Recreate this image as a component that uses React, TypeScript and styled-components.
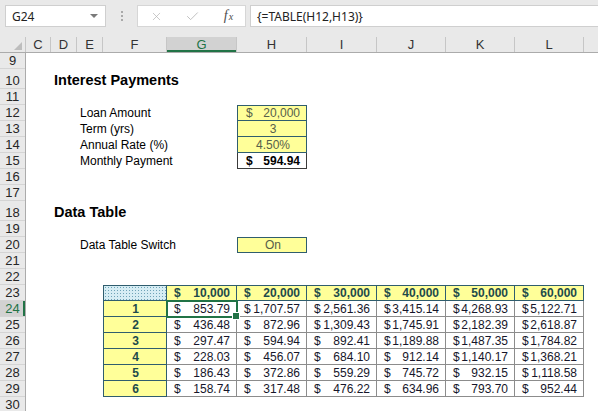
import React from 'react';
import styled, { createGlobalStyle, css } from 'styled-components';
import { X, Check } from 'lucide-react';

const TEAL = '#2f5d6e';
const GRAY = '#8c8c8c';
const YELLOW = '#ffff99';
const EXCEL_GREEN = '#217346';

const COLUMNS = [
  { name: 'C', width: 25 },
  { name: 'D', width: 26 },
  { name: 'E', width: 26 },
  { name: 'F', width: 64 },
  { name: 'G', width: 70 },
  { name: 'H', width: 70 },
  { name: 'I', width: 70 },
  { name: 'J', width: 69 },
  { name: 'K', width: 69 },
  { name: 'L', width: 69 },
];

// excel row number -> pixel height (rows 10 and 18 hold the bigger headings)
const ROWS = Array.from({ length: 22 }, (_, i) => {
  const num = i + 9;
  return { num, height: num === 10 || num === 18 ? 20 : 16 };
});

const LOAN_AMOUNTS = ['10,000', '20,000', '30,000', '40,000', '50,000', '60,000'];

const PAYMENTS = [
  ['853.79', '1,707.57', '2,561.36', '3,415.14', '4,268.93', '5,122.71'],
  ['436.48', '872.96', '1,309.43', '1,745.91', '2,182.39', '2,618.87'],
  ['297.47', '594.94', '892.41', '1,189.88', '1,487.35', '1,784.82'],
  ['228.03', '456.07', '684.10', '912.14', '1,140.17', '1,368.21'],
  ['186.43', '372.86', '559.29', '745.72', '932.15', '1,118.58'],
  ['158.74', '317.48', '476.22', '634.96', '793.70', '952.44'],
];

const App = () => {
  return (
    <>
      <GlobalStyle />
      <Window>
        <FormulaBar>
          <NameBox>
            <span>G24</span>
            <DropArrow />
          </NameBox>
          <Grip>
            <Dot />
            <Dot />
            <Dot />
          </Grip>
          <ButtonGroup>
            <BarButton>
              <X size={13} strokeWidth={1.3} />
            </BarButton>
            <BarButton>
              <Check size={15} strokeWidth={1.3} />
            </BarButton>
            <BarButton $dark>
              <Fx>
                f<small>x</small>
              </Fx>
            </BarButton>
          </ButtonGroup>
          <FormulaInput>{'{=TABLE(H12,H13)}'}</FormulaInput>
        </FormulaBar>

        <ColumnHeaders>
          <Corner />
          {COLUMNS.map((col) => (
            <ColumnHeader key={col.name} $width={col.width} $selected={col.name === 'G'}>
              {col.name}
            </ColumnHeader>
          ))}
          <ColumnHeader $width={0} $fill />
        </ColumnHeaders>

        <Body>
          <RowHeaders>
            {ROWS.map((row) => (
              <RowHeader key={row.num} $height={row.height} $selected={row.num === 24}>
                {row.num}
              </RowHeader>
            ))}
          </RowHeaders>

          <Sheet>
            <Heading $area="2 / 2 / 3 / 9">Interest Payments</Heading>

            <Label $area="4 / 3 / 5 / 6">Loan Amount</Label>
            <Label $area="5 / 3 / 6 / 6">Term (yrs)</Label>
            <Label $area="6 / 3 / 7 / 6">Annual Rate (%)</Label>
            <Label $area="7 / 3 / 8 / 6">Monthly Payment</Label>

            <InputStack $area="4 / 6 / 8 / 7">
              <InputCell $money>
                <span>$</span>
                <span>20,000</span>
              </InputCell>
              <InputCell>3</InputCell>
              <InputCell>4.50%</InputCell>
              <ResultCell>
                <span>$</span>
                <span>594.94</span>
              </ResultCell>
            </InputStack>

            <Heading $area="10 / 2 / 11 / 9">Data Table</Heading>

            <Label $area="12 / 3 / 13 / 6">Data Table Switch</Label>
            <SwitchCell $area="12 / 6 / 13 / 7">On</SwitchCell>

            <DataTable $area="15 / 4 / 22 / 11">
              <TableCell $kind="corner" $top $left />
              {LOAN_AMOUNTS.map((amount) => (
                <TableCell key={amount} $kind="head" $top>
                  <span>$</span>
                  <span>{amount}</span>
                </TableCell>
              ))}
              {PAYMENTS.map((row, i) => (
                <React.Fragment key={i}>
                  <TableCell $kind="key" $left>
                    {i + 1}
                  </TableCell>
                  {row.map((value, j) => (
                    <TableCell key={j} $kind="value" $selected={i === 0 && j === 0}>
                      <span>$</span>
                      <span>{value}</span>
                    </TableCell>
                  ))}
                </React.Fragment>
              ))}
            </DataTable>
          </Sheet>
        </Body>
      </Window>
    </>
  );
};

export default App;

const GlobalStyle = createGlobalStyle`
  * {
    box-sizing: border-box;
  }

  html,
  body {
    margin: 0;
    padding: 0;
    background: #ffffff;
  }
`;

const Window = styled.div`
  display: flex;
  flex-direction: column;

  width: 598px;
  height: 411px;
  overflow: hidden;

  background: #ffffff;
  font-family: 'Liberation Sans', Arial, sans-serif;
`;

/* ---------- formula bar ---------- */

const FormulaBar = styled.div`
  display: flex;
  align-items: flex-start;
  flex-shrink: 0;

  height: 37px;
  padding: 5px 0 0 5px;

  background: #e9e9e9;
  font-family: 'Noto Sans', 'Open Sans', sans-serif;
  font-size: 12px;
  color: #222222;
`;

const NameBox = styled.div`
  display: flex;
  align-items: center;
  justify-content: space-between;

  width: 101px;
  height: 22px;
  padding: 0 7px 0 6px;

  background: #ffffff;
  border: 1px solid #cfcfcf;
`;

const DropArrow = styled.span`
  width: 0;
  height: 0;

  border-left: 4px solid transparent;
  border-right: 4px solid transparent;
  border-top: 4px solid #7a7a7a;
`;

const Grip = styled.div`
  display: flex;
  flex-direction: column;
  align-items: center;
  gap: 2px;

  width: 31px;
  padding-top: 6px;
`;

const Dot = styled.span`
  width: 2px;
  height: 2px;

  background: #a9a9a9;
`;

const ButtonGroup = styled.div`
  display: grid;
  grid-template-columns: 36px 36px 37px;

  width: 109px;
  height: 22px;

  background: #ffffff;
  border: 1px solid #d6d6d6;
`;

const BarButton = styled.div<{ $dark?: boolean }>`
  display: flex;
  align-items: center;
  justify-content: center;

  color: ${(p) => (p.$dark ? '#4d4d4d' : '#b3b3b3')};
`;

const Fx = styled.span`
  font-family: 'Liberation Serif', 'Times New Roman', serif;
  font-style: italic;
  font-size: 14px;

  small {
    font-size: 10px;
    margin-left: 1px;
  }
`;

const FormulaInput = styled.div`
  display: flex;
  align-items: center;
  flex: 1;

  height: 22px;
  margin-left: 4px;
  padding-left: 6px;

  background: #ffffff;
  border: 1px solid #cfcfcf;
  border-right: none;
`;

/* ---------- headers ---------- */

const ColumnHeaders = styled.div`
  display: flex;
  flex-shrink: 0;

  height: 16px;

  background: #e9e9e9;
  border-bottom: 1px solid #ababab;
  font-family: 'Liberation Sans', Arial, sans-serif;
  font-size: 13px;
  line-height: 15px;
  color: #333333;
`;

const Corner = styled.div`
  position: relative;

  width: 26px;

  border-right: 1px solid #c6c6c6;

  &::after {
    content: '';
    position: absolute;
    right: 3px;
    bottom: 2px;

    border-left: 8px solid transparent;
    border-bottom: 8px solid #bdbdbd;
  }
`;

const ColumnHeader = styled.div<{ $width: number; $selected?: boolean; $fill?: boolean }>`
  display: flex;
  align-items: center;
  justify-content: center;
  flex: ${(p) => (p.$fill ? '1' : `0 0 ${p.$width}px`)};

  border-right: ${(p) => (p.$fill ? 'none' : '1px solid #c6c6c6')};

  ${(p) =>
    p.$selected &&
    css`
      background: #d2d2d2;
      color: ${EXCEL_GREEN};
      box-shadow: inset 0 -2px 0 ${EXCEL_GREEN};
    `}
`;

const Body = styled.div`
  display: flex;
  flex: 1;
  min-height: 0;
  overflow: hidden;
`;

const RowHeaders = styled.div`
  display: flex;
  flex-direction: column;
  flex-shrink: 0;

  width: 26px;

  background: #e9e9e9;
  border-right: 1px solid #ababab;
  font-family: 'Liberation Sans', Arial, sans-serif;
  font-size: 13px;
  line-height: 15px;
  color: #262626;
`;

const RowHeader = styled.div<{ $height: number; $selected?: boolean }>`
  display: flex;
  align-items: flex-end;
  justify-content: center;
  flex: 0 0 ${(p) => p.$height}px;

  border-bottom: 1px solid #d4d4d4;

  ${(p) =>
    p.$selected &&
    css`
      background: #d2d2d2;
      color: ${EXCEL_GREEN};
      box-shadow: inset -2px 0 0 ${EXCEL_GREEN};
    `}
`;

/* ---------- sheet ---------- */

const Sheet = styled.div`
  display: grid;
  flex: 1;
  grid-template-columns: ${COLUMNS.map((c) => `${c.width}px`).join(' ')} 1fr;
  grid-template-rows: ${ROWS.map((r) => `${r.height}px`).join(' ')};

  font-size: 12px;
  color: #000000;
`;

const Heading = styled.div<{ $area: string }>`
  grid-area: ${(p) => p.$area};
  align-self: end;

  padding-left: 3px;

  font-size: 14.5px;
  font-weight: bold;
  line-height: 18px;
  white-space: nowrap;
`;

const Label = styled.div<{ $area: string }>`
  grid-area: ${(p) => p.$area};
  display: flex;
  align-items: center;

  padding-left: 3px;

  white-space: nowrap;
`;

const InputStack = styled.div<{ $area: string }>`
  grid-area: ${(p) => p.$area};
  display: flex;
  flex-direction: column;
`;

const InputCell = styled.div<{ $money?: boolean }>`
  display: flex;
  align-items: center;
  justify-content: ${(p) => (p.$money ? 'space-between' : 'center')};

  height: 16px;
  padding: 0 6px 0 8px;

  background: ${YELLOW};
  border: 1px solid ${TEAL};
  border-top: none;
  color: #56604a;

  &:first-child {
    border-top: 1px solid ${TEAL};
  }
`;

const ResultCell = styled.div`
  display: flex;
  align-items: center;
  justify-content: space-between;

  height: 16px;
  padding: 0 6px 0 8px;

  border: 1px solid #3a3a3a;
  border-top: none;
  font-weight: bold;
`;

const SwitchCell = styled(InputCell)<{ $area: string }>`
  grid-area: ${(p) => p.$area};

  border-top: 1px solid ${TEAL};
`;

const DataTable = styled.div<{ $area: string }>`
  grid-area: ${(p) => p.$area};
  display: grid;
  grid-template-columns: ${COLUMNS.slice(3)
    .map((c) => `${c.width}px`)
    .join(' ')};
  grid-auto-rows: 16px;
`;

type CellKind = 'corner' | 'head' | 'key' | 'value';

const cellBackground = (kind: CellKind) => {
  if (kind === 'value') return '#ffffff';
  if (kind === 'corner') return '#d6edf4';
  return YELLOW;
};

const TableCell = styled.div<{
  $kind: CellKind;
  $top?: boolean;
  $left?: boolean;
  $selected?: boolean;
}>`
  position: relative;
  display: flex;
  align-items: center;
  justify-content: ${(p) => (p.$kind === 'key' ? 'center' : 'space-between')};

  padding: 0 6px 0 7px;

  background-color: ${(p) => cellBackground(p.$kind)};
  border-right: 1px solid ${(p) => (p.$kind === 'value' ? GRAY : TEAL)};
  border-bottom: 1px solid ${(p) => (p.$kind === 'value' ? GRAY : TEAL)};
  color: ${(p) => (p.$kind === 'value' ? '#16162a' : '#1d4b4b')};
  font-weight: ${(p) => (p.$kind === 'head' || p.$kind === 'key' ? 'bold' : 'normal')};

  ${(p) =>
    p.$kind === 'corner' &&
    css`
      background-image: radial-gradient(circle, #6fa3b7 0.7px, transparent 0.9px);
      background-size: 3px 3px;
    `}

  ${(p) =>
    p.$top &&
    css`
      border-top: 1px solid ${TEAL};
    `}

  ${(p) =>
    p.$left &&
    css`
      border-left: 1px solid ${TEAL};
    `}

  ${(p) =>
    p.$selected &&
    css`
      z-index: 1;
      outline: 2px solid ${EXCEL_GREEN};
      outline-offset: -1px;

      &::after {
        content: '';
        position: absolute;
        right: -4px;
        bottom: -4px;

        width: 6px;
        height: 6px;

        background: ${EXCEL_GREEN};
        border: 1px solid #ffffff;
      }
    `}
`;
